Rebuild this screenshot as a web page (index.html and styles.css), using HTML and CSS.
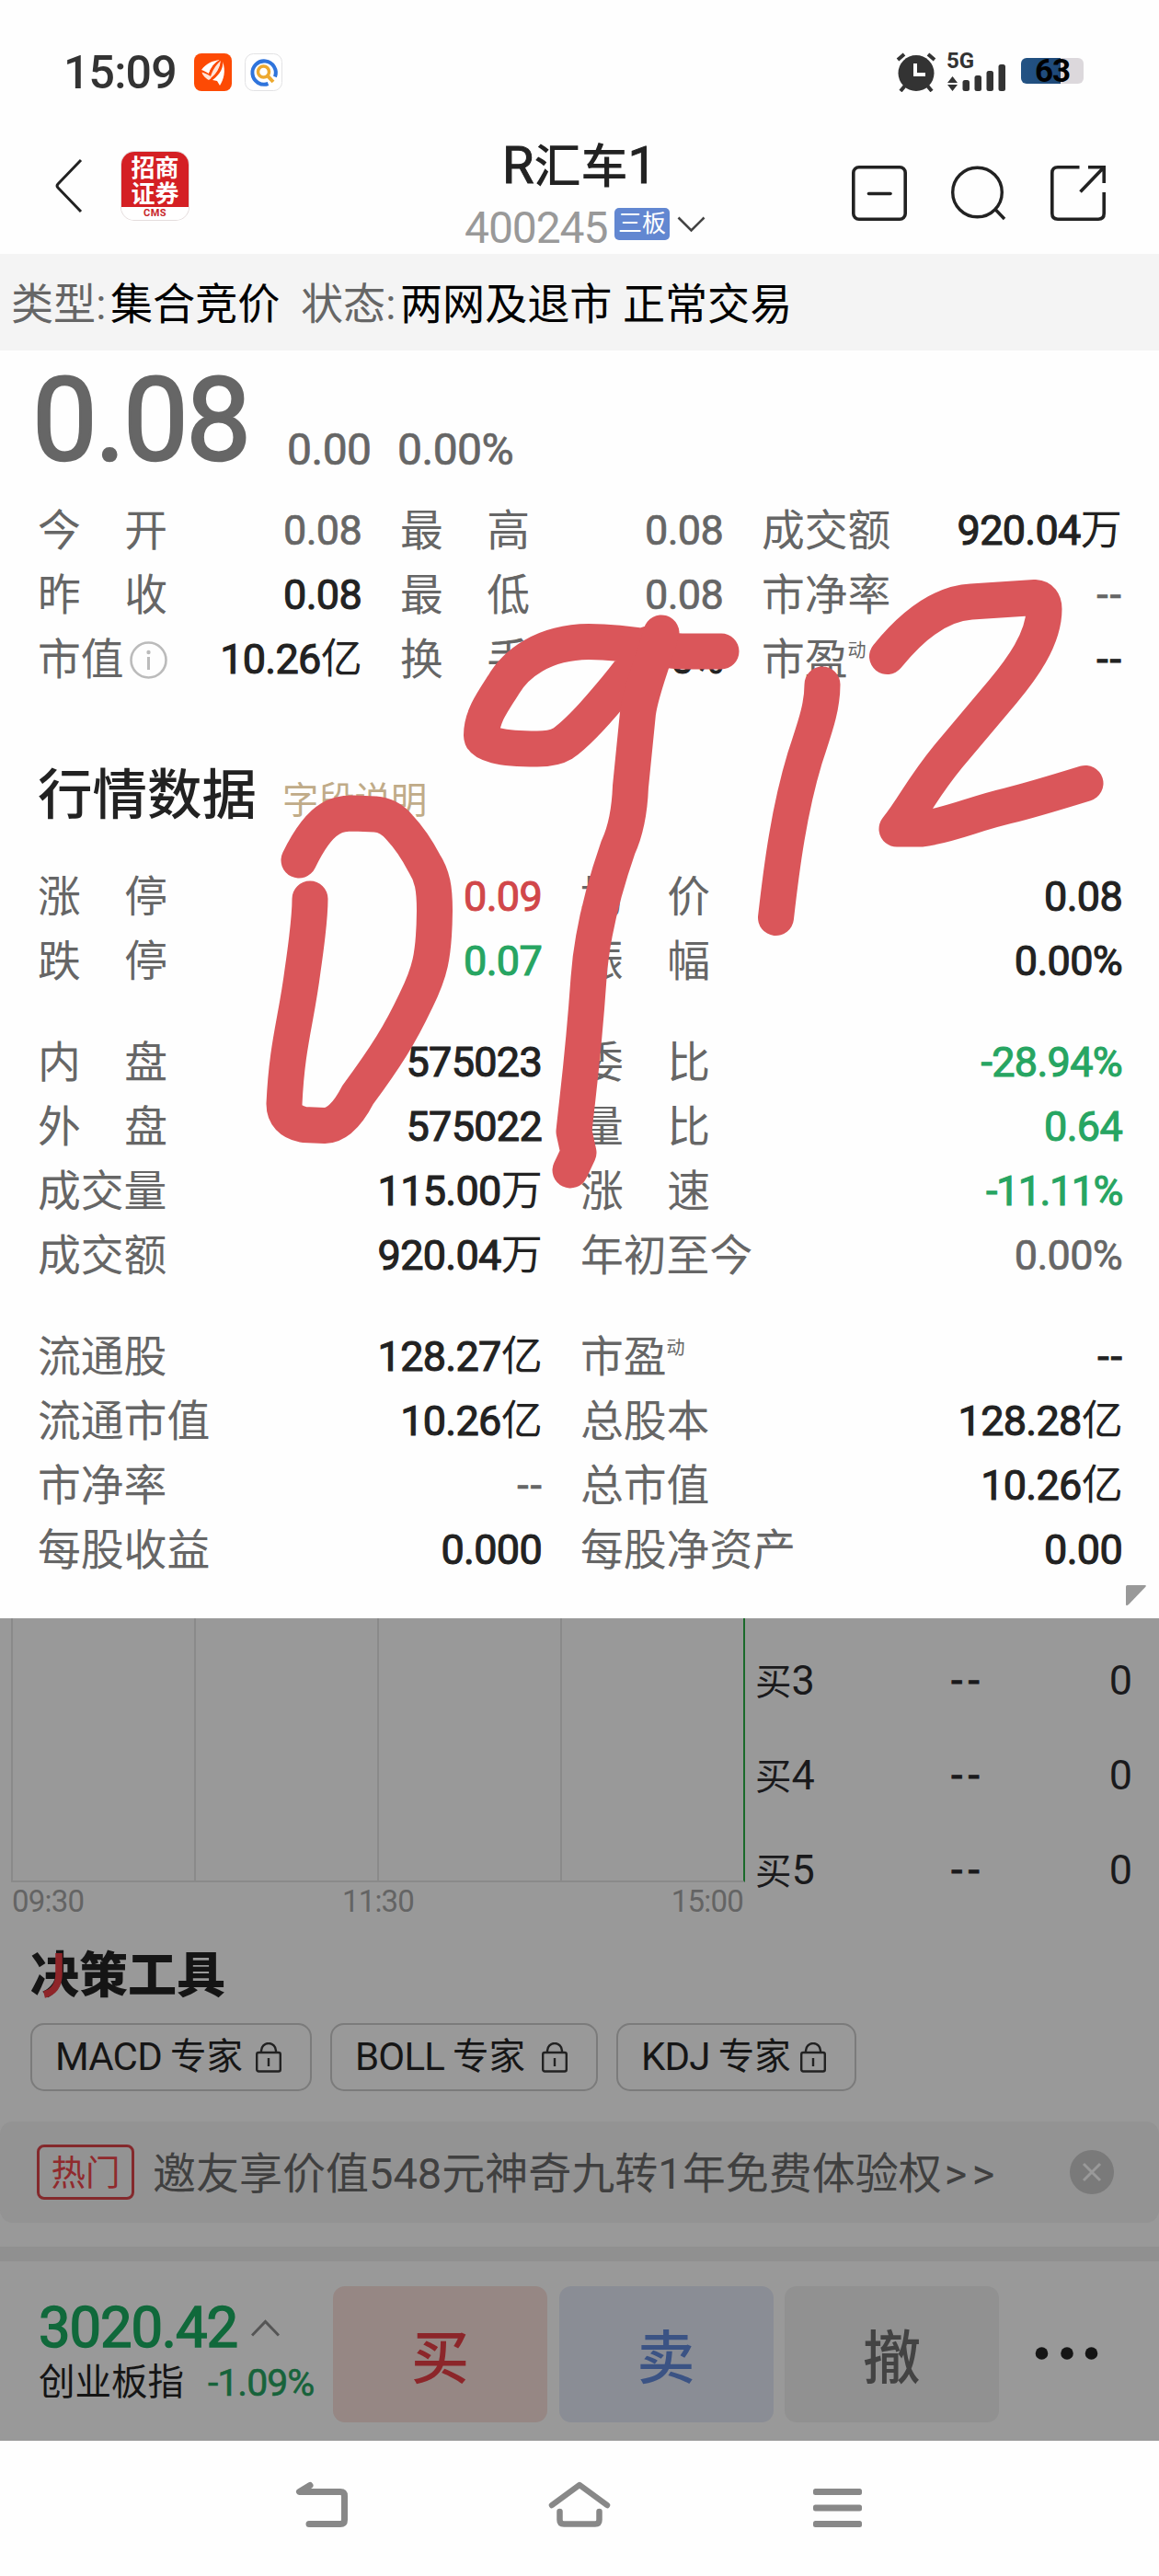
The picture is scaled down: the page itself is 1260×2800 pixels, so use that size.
FILE: index.html
```html
<!DOCTYPE html>
<html lang="zh-CN">
<head>
<meta charset="utf-8">
<title>R汇车1 400245</title>
<link rel="stylesheet" href="styles.css">
</head>
<body>
<div class="phone">
  <div class="status">
    <span class="clock">15:09</span>
    <svg class="app-a" width="41" height="41" viewBox="0 0 41 41"><rect width="41" height="41" rx="8" fill="#fd4a04"/><g fill="#fff"><path d="M8 18C13 11 20 8 28 7C22 11 18 16 16 22C13 20 11 19 8 18Z"/><path d="M29 8C23 13 20 19 18 25C15 23 11 21 8.500 20.500C9 23 11 26 16 29C23 25 28 18 29 8Z" opacity=".85"/><path d="M31 9C32 15 29 22 20 29L25 30L28 35C32 29 35 19 31 9Z"/></g><path d="M29 7Q19 12 16.500 23M30 8Q28 20 18.500 27.500" fill="none" stroke="#fd4a04" stroke-width="1.300"/></svg>
    <svg class="app-b" width="41" height="41" viewBox="0 0 41 41"><rect x=".5" y=".5" width="40" height="40" rx="9" fill="#fff" stroke="#e2e2e4"/><g fill="none" stroke-linecap="butt"><path d="M25.500 33A12.700 12.700 0 1 1 33 25.500" stroke="#2f74dc" stroke-width="4"/><circle cx="20.500" cy="20" r="6" stroke="#eda92f" stroke-width="3.500"/><path d="M24.500 24L31 31" stroke="#eda92f" stroke-width="4"/></g></svg>
    <svg class="alarm" width="44" height="43" viewBox="0 0 44 43"><circle cx="22" cy="22.500" r="19.500" fill="#333"/><path d="M2 8L9 2M42 8L35 2M5 42L10 36M39 42L34 36" stroke="#333" stroke-width="4"/><path d="M21 12V24H32" fill="none" stroke="#fff" stroke-width="4"/></svg>
    <div class="signal">
      <span class="net">5G</span>
      <svg width="66" height="29" viewBox="0 0 66 29" fill="#333"><path d="M6.500 13L12 20H1ZM6.500 29L1 22H12Z"/><rect x="17.500" y="17" width="7.500" height="12" rx="2.500"/><rect x="30.500" y="12" width="7.500" height="17" rx="2.500"/><rect x="43.500" y="7" width="7.500" height="22" rx="2.500"/><rect x="56.500" y="0" width="7.500" height="29" rx="2.500"/></svg>
    </div>
    <div class="battery">63</div>
  </div>

  <header class="header">
    <svg class="back" width="32" height="62" viewBox="0 0 32 62"><path d="M29 3L4 29Q2 31 4 33L29 59" fill="none" stroke="#222" stroke-width="3"/></svg>
    <div class="logo"><span class="logo-cn">招商</span><span class="logo-cn">证券</span><span class="logo-en">CMS</span></div>
    <div class="title">
      <div class="name"><b>R</b>汇车<b>1</b></div>
      <div class="code"><span>400245</span><i class="board">三板</i><svg width="31" height="18" viewBox="0 0 31 18"><path d="M1.500 1.500L15.500 15.500L29.500 1.500" fill="none" stroke="#444" stroke-width="2.600"/></svg></div>
    </div>
    <div class="actions">
      <svg width="60" height="60" viewBox="0 0 60 60" fill="none" stroke="#222" stroke-width="3.600" stroke-linecap="round"><rect x="1.800" y="1.800" width="56.400" height="56.400" rx="6"/><path d="M18.500 30.500H42"/></svg>
      <svg width="60" height="60" viewBox="0 0 60 60" fill="none" stroke="#222" stroke-width="3.400"><circle cx="28.500" cy="29" r="26.800"/><path d="M47.500 47L58 58"/></svg>
      <svg width="60" height="60" viewBox="0 0 60 60" fill="none" stroke="#222" stroke-width="3.600"><path d="M31.500 1.800H8Q1.800 1.800 1.800 8V52Q1.800 58.200 8 58.200H52Q58.200 58.200 58.200 52V29M41 1.800H58.200V19M58.200 1.800L32.500 28.500"/></svg>
    </div>
  </header>

  <div class="state"><span class="dim">类型:</span><span class="v1">集合竞价</span><span class="dim">状态:</span><span class="v2">两网及退市 正常交易</span></div>

  <main class="panel">
    <div class="price"><span class="last">0.08</span><span class="chg">0.00</span><span class="chg">0.00%</span></div>

    <div class="summary">
      <div class="cell"><span class="lb w3"><i>今</i><i>开</i></span><span class="val flat">0.08</span></div>
      <div class="cell"><span class="lb w3"><i>最</i><i>高</i></span><span class="val flat">0.08</span></div>
      <div class="cell"><span class="lb">成交额</span><span class="val">920.04<u>万</u></span></div>
      <div class="cell"><span class="lb w3"><i>昨</i><i>收</i></span><span class="val">0.08</span></div>
      <div class="cell"><span class="lb w3"><i>最</i><i>低</i></span><span class="val flat">0.08</span></div>
      <div class="cell"><span class="lb">市净率</span><span class="val flat none">--</span></div>
      <div class="cell"><span class="lb">市值</span><svg class="info" width="41" height="41" viewBox="0 0 41 41"><circle cx="20.500" cy="20.500" r="19" fill="none" stroke="#bbb" stroke-width="2.600"/><path d="M20.500 17V31" stroke="#bbb" stroke-width="3"/><circle cx="20.500" cy="12" r="2.200" fill="#bbb"/></svg><span class="val">10.26<u>亿</u></span></div>
      <div class="cell"><span class="lb w3"><i>换</i><i>手</i></span><span class="val">0.90%</span></div>
      <div class="cell"><span class="lb">市盈<sup>动</sup></span><span class="val none">--</span></div>
    </div>

    <div class="section"><h2>行情数据</h2><a>字段说明</a></div>

    <div class="detail">
      <div class="cell"><span class="lb w3"><i>涨</i><i>停</i></span><span class="val up">0.09</span></div>
      <div class="cell"><span class="lb w3"><i>均</i><i>价</i></span><span class="val">0.08</span></div>
      <div class="cell"><span class="lb w3"><i>跌</i><i>停</i></span><span class="val down">0.07</span></div>
      <div class="cell"><span class="lb w3"><i>振</i><i>幅</i></span><span class="val">0.00%</span></div>
    </div>
    <div class="detail">
      <div class="cell"><span class="lb w3"><i>内</i><i>盘</i></span><span class="val">575023</span></div>
      <div class="cell"><span class="lb w3"><i>委</i><i>比</i></span><span class="val down">-28.94%</span></div>
      <div class="cell"><span class="lb w3"><i>外</i><i>盘</i></span><span class="val">575022</span></div>
      <div class="cell"><span class="lb w3"><i>量</i><i>比</i></span><span class="val down">0.64</span></div>
      <div class="cell"><span class="lb">成交量</span><span class="val">115.00<u>万</u></span></div>
      <div class="cell"><span class="lb w3"><i>涨</i><i>速</i></span><span class="val down ones">-11.11%</span></div>
      <div class="cell"><span class="lb">成交额</span><span class="val">920.04<u>万</u></span></div>
      <div class="cell"><span class="lb">年初至今</span><span class="val flat">0.00%</span></div>
    </div>
    <div class="detail">
      <div class="cell"><span class="lb">流通股</span><span class="val">128.27<u>亿</u></span></div>
      <div class="cell"><span class="lb">市盈<sup>动</sup></span><span class="val none">--</span></div>
      <div class="cell"><span class="lb">流通市值</span><span class="val">10.26<u>亿</u></span></div>
      <div class="cell"><span class="lb">总股本</span><span class="val">128.28<u>亿</u></span></div>
      <div class="cell"><span class="lb">市净率</span><span class="val flat none">--</span></div>
      <div class="cell"><span class="lb">总市值</span><span class="val">10.26<u>亿</u></span></div>
      <div class="cell"><span class="lb">每股收益</span><span class="val">0.000</span></div>
      <div class="cell"><span class="lb">每股净资产</span><span class="val">0.00</span></div>
    </div>
    <svg class="fold" width="22" height="22" viewBox="0 0 22 22"><path d="M1.500 0H20.500Q23 0 21.200 2L3 21Q0 23.500 0 20.500V1.500Q0 0 1.500 0Z" fill="#999"/></svg>
  </main>

  <div class="under">
    <div class="market">
      <div class="chart">
        <div class="plot"><i></i><i></i><i></i><i></i></div>
        <div class="axis"><span>09:30</span><span>11:30</span><span>15:00</span></div>
      </div>
      <div class="book">
        <div><span>买<b>3</b></span><span class="dash">--</span><span>0</span></div>
        <div><span>买<b>4</b></span><span class="dash">--</span><span>0</span></div>
        <div><span>买<b>5</b></span><span class="dash">--</span><span>0</span></div>
      </div>
    </div>
    <div class="tools-title">决策工具<svg width="46" height="50" viewBox="0 0 46 50"><path d="M25 0V22Q25 41 9 45" fill="none" stroke="#8f2529" stroke-width="7.500"/></svg></div>
    <div class="tools">
      <div class="tool t1"><b>MACD</b>专家<svg width="28" height="33" viewBox="0 0 28 33"><path d="M6 11V9A8 8 0 0 1 22 9V11M14 17V26" fill="none" stroke="#222" stroke-width="2.400"/><rect x="1.200" y="11" width="25.600" height="20.500" rx="2" fill="none" stroke="#222" stroke-width="2.400"/></svg></div>
      <div class="tool t2"><b>BOLL</b>专家<svg width="28" height="33" viewBox="0 0 28 33"><path d="M6 11V9A8 8 0 0 1 22 9V11M14 17V26" fill="none" stroke="#222" stroke-width="2.400"/><rect x="1.200" y="11" width="25.600" height="20.500" rx="2" fill="none" stroke="#222" stroke-width="2.400"/></svg></div>
      <div class="tool t3"><b>KDJ</b>专家<svg width="28" height="33" viewBox="0 0 28 33"><path d="M6 11V9A8 8 0 0 1 22 9V11M14 17V26" fill="none" stroke="#222" stroke-width="2.400"/><rect x="1.200" y="11" width="25.600" height="20.500" rx="2" fill="none" stroke="#222" stroke-width="2.400"/></svg></div>
    </div>
    <div class="promo"><span class="hot">热门</span><span class="promo-text">邀友享价值548元神奇九转1年免费体验权<b>&gt;&gt;</b></span><svg width="48" height="48" viewBox="0 0 48 48"><circle cx="24" cy="24" r="24" fill="#7a7a7a"/><path d="M15 15L33 33M33 15L15 33" stroke="#999" stroke-width="3"/></svg></div>
    <div class="band"></div>
    <div class="trade">
      <div class="index">
        <div class="idx-row"><span class="idx">3020.42</span><svg width="31" height="19" viewBox="0 0 31 19"><path d="M1 17.500L15.500 2.500L30 17.500" fill="none" stroke="#555" stroke-width="3"/></svg></div>
        <div class="idx-sub"><span>创业板指</span><em>-1.09%</em></div>
      </div>
      <div class="btn buy">买</div>
      <div class="btn sell">卖</div>
      <div class="btn cancel">撤</div>
      <svg class="more" width="70" height="16" viewBox="0 0 70 16" fill="#151515"><circle cx="7.500" cy="8" r="6.800"/><circle cx="35" cy="8" r="6.800"/><circle cx="61.500" cy="8" r="6.800"/></svg>
    </div>
  </div>

  <nav class="nav">
    <svg width="58" height="52" viewBox="0 0 58 52" fill="none" stroke="#888" stroke-width="7" stroke-linecap="round" stroke-linejoin="round"><path d="M16 4.500L4.500 11.500H49Q53.500 11.500 53.500 16V42Q53.500 46.500 49 46.500H15"/></svg>
    <svg width="68" height="52" viewBox="0 0 68 52" fill="none" stroke="#888" stroke-width="6.500" stroke-linecap="round" stroke-linejoin="round"><path d="M4 26L34 4L64 26M12.500 33V42Q12.500 46.500 17 46.500H51Q55.500 46.500 55.500 42V33"/></svg>
    <svg width="53" height="52" viewBox="0 0 53 52" fill="#888"><rect y="8" width="53" height="7" rx="2.500"/><rect y="25.500" width="53" height="7" rx="2.500"/><rect y="43" width="53" height="7" rx="2.500"/></svg>
  </nav>

  <svg class="ink" width="1260" height="2800" viewBox="0 0 1260 2800" fill="none" stroke="#da565a" stroke-width="39" stroke-linecap="round" stroke-linejoin="round">
    <path d="M325 935Q342 900 359 890Q368 884 384 884L408 885Q423 886 434 899Q449 915 461 938C470 952 472.500 965 472.500 990C472 1040 467 1058 452 1088C435 1124 420 1148 389 1190Q372 1223 353 1223.500L330 1222.500Q309 1218 309 1200C312 1135 322 1110 329 1055Q337 1000 337 977"/>
    <path d="M784 708H742C720 708 690 697.500 640 697.500C590 698 560 722 547 745C534 765 523.500 780 523.500 799Q524 814 584 814Q602 814 612 808C640 788 690 725 705 700"/>
    <path d="M719 688C706 730 697 750 693.500 775L685.500 855Q684 895 672 921C655 970 643 1020 640 1063C634 1150 628 1190 624 1230L629 1253L620 1272"/>
    <path d="M894 744C894 770 885 793 875 824C858 880 850 940 843.500 997.500"/>
    <path d="M964.500 713.500C990 682 1020 656 1056 654L1125 649.500Q1135 650 1135 662C1135 695 1110 728 1090 752L1031 822C1000 860 995 876 975 901H1001C1030 898 1060 884 1095 876Q1120 870 1180 851.500"/>
  </svg>
</div>
</body>
</html>
```
FILE: styles.css
```css
* { box-sizing: border-box; }
body { margin: 0; background: #fff; font-family: Roboto, "Noto Sans CJK SC", sans-serif; color: #222; }
i, em { font-style: normal; }
u { text-decoration: none; }
svg { display: block; flex: none; }

.phone { position: relative; display: flex; flex-direction: column; width: 1260px; height: 2800px; overflow: hidden; background: #fefefe; }

.status { display: flex; align-items: flex-start; height: 150px; padding: 57px 82px 0 69px; color: #333; }
.clock { width: 142px; margin-top: -2px; font-size: 50px; line-height: 48px; font-weight: 500; letter-spacing: -.8px; }
.app-a { margin: 1px 14px 0 0; }
.app-b { margin-top: 1px; }
.alarm { margin-left: auto; }
.signal { width: 66px; margin-left: 11px; }
.net { display: block; height: 13px; font-size: 24px; line-height: 18px; font-weight: 700; }
.battery { width: 68px; height: 28px; margin: 6px 0 0 15px; border-radius: 6px; background: linear-gradient(90deg, #235384 0, #1e4877 43px, #dcd8dc 43px); font-size: 35px; line-height: 29px; font-weight: 700; letter-spacing: -1px; text-align: center; color: #000; }

.header { display: grid; grid-template-columns: 73px 374px 366px 1fr; height: 126px; padding-left: 59px; }
.back { margin-top: 21px; }
.logo { display: flex; flex-direction: column; align-items: center; width: 73px; height: 74px; margin-top: 15px; padding-top: 2px; border-radius: 14px; background: linear-gradient(#d42024 60px, #fff 60px); box-shadow: 0 0 0 1px #e4dcdc; color: #fff; }
.logo-cn { height: 28px; font-family: "Noto Sans CJK SC", sans-serif; font-size: 26px; line-height: 28px; font-weight: 700; }
.logo-en { margin-top: 3px; font-size: 11px; line-height: 12px; font-weight: 700; color: #c8272b; letter-spacing: .5px; }
.name { height: 73px; padding-left: 40px; font-size: 51px; line-height: 61px; font-weight: 500; white-space: nowrap; }
.name b { font-size: 56px; font-weight: 400; -webkit-text-stroke: 1px #222; }
.code { display: flex; align-items: center; height: 45px; font-size: 48px; line-height: 45px; color: #999; }
.code span { width: 162px; padding-top: 3px; letter-spacing: -1.100px; margin-left: -1px; }
.code .board { width: 60px; height: 35px; margin: -5px 8px 0 1px; border-radius: 5px; background: #6287d1; color: #fff; font-size: 26px; line-height: 34px; text-align: center; }
.code svg { margin-top: -4px; }
.actions { display: flex; gap: 48px; padding: 30px 0 0 54px; }

.state { display: flex; height: 105px; padding-left: 12px; background: #f4f4f4; font-size: 46.100px; line-height: 111px; color: #000; white-space: pre; }
.dim { color: #666; width: 108px; }
.v1 { width: 207px; }

.panel { position: relative; height: 1378px; background: #fefefe; }
.price { display: flex; align-items: baseline; height: 161px; padding-left: 35px; color: #666; }
.last { width: 277px; font-size: 126px; line-height: 153px; letter-spacing: -2.500px; -webkit-text-stroke: 2.500px #666; }
.chg { position: relative; top: 5px; width: 120px; font-size: 48px; -webkit-text-stroke: .7px #666; letter-spacing: -.5px; }

.summary { display: grid; grid-template-columns: 351px 350px 390px; column-gap: 43px; padding-left: 41px; grid-auto-rows: 70px; }
.cell { display: flex; align-items: center; height: 70px; line-height: 70px; white-space: nowrap; }
.lb { font-size: 46.800px; color: #666; }
.w3 { display: flex; justify-content: space-between; width: 141px; }
.lb sup { font-size: 20px; line-height: 20px; vertical-align: 19px; }
.info { margin-left: 6px; }
.val { margin-left: auto; margin-right: -1px; font-size: 45px; letter-spacing: -.7px; -webkit-text-stroke: 1.100px currentColor; }
.val u { -webkit-text-stroke: 0; }
.flat { color: #666; -webkit-text-stroke-width: .7px; }
.none { margin-right: -3px; letter-spacing: 2px; }
.ones { letter-spacing: -1.500px; }
.up { color: #d1474a; }
.down { color: #27a562; }

.section { display: flex; align-items: center; gap: 28px; height: 90px; margin: 68px 0 30px; padding-left: 41px; }
.section h2 { margin: 0; font-size: 59.500px; line-height: 90px; font-weight: 500; }
.section a { padding-top: 12px; font-size: 39.300px; line-height: 78px; color: #c0ab88; }

.detail { display: grid; grid-template-columns: 547px 588px; column-gap: 43px; padding-left: 41px; margin-bottom: 40px; }
.fold { position: absolute; right: 14px; bottom: 14px; }

.under { height: 894px; background: #999; color: #1a1a1c; }
.market { display: flex; height: 339px; }
.chart { width: 810px; padding-left: 12px; }
.plot { display: grid; grid-template-columns: repeat(4, 1fr); height: 287px; border-bottom: 2px solid #8a8a8a; border-right: 2px solid #1a6a2a; }
.plot i { border-left: 2px solid #8a8a8a; }
.axis { display: flex; justify-content: space-between; padding-left: 1px; font-size: 33px; line-height: 42px; color: #646464; letter-spacing: -.8px; }
.axis span:nth-child(2) { margin-right: -10px; margin-left: -9px; }
.axis span:nth-child(3) { margin-right: 2px; }
.book { flex: 1; padding: 16px 29px 0 11px; font-size: 45px; }
.book div { display: grid; grid-template-columns: 210px 1fr auto; height: 103px; line-height: 103px; }
.book span:first-child { font-size: 39.500px; }
.book b { font-size: 45px; font-weight: 400; }
.dash { letter-spacing: 6px; -webkit-text-stroke: .8px #1a1a1c; padding-left: 3px; }
.tools-title { position: relative; height: 101px; padding: 23px 0 0 33px; font-size: 53px; line-height: 54px; font-weight: 900; color: #151515; }
.tools-title svg { position: absolute; left: 39px; top: 25px; }
.tools { display: flex; gap: 20px; padding-left: 33px; height: 74px; }
.tool { display: flex; align-items: center; padding-left: 25px; border: 2px solid #7b7b7b; border-radius: 15px; font-size: 39.500px; line-height: 70px; color: #161616; }
.tool b { font-size: 42px; font-weight: 400; margin-right: 9px; letter-spacing: -.8px; }
.tool svg { margin-left: auto; }
.t1 { width: 306px; padding-right: 31px; }
.t2 { width: 291px; padding-right: 31px; }
.t3 { width: 261px; padding-right: 31px; }
.promo { display: flex; align-items: center; height: 110px; margin-top: 33px; padding: 0 49px 0 40px; border-radius: 14px; background: #939393; }
.hot { width: 106px; height: 60px; border: 3px solid #84292c; border-radius: 8px; color: #902a2d; font-size: 37.500px; line-height: 57px; text-align: center; }
.promo-text { margin-left: 20px; padding-top: 3px; font-size: 47px; line-height: 70px; color: #404040; }
.promo-text b { margin-left: 3px; font-weight: 400; letter-spacing: 5.500px; }
.promo svg { margin-left: auto; }
.band { height: 16px; margin-top: 26px; background: #909090; }
.trade { display: flex; align-items: center; height: 195px; padding: 6px 0 0 42px; }
.index { width: 320px; padding-bottom: 7px; }
.idx-row { display: flex; align-items: center; height: 70px; }
.idx { width: 231px; font-size: 61.500px; line-height: 70px; color: #10693b; letter-spacing: -1.100px; -webkit-text-stroke: 1.500px #10693b; }
.idx-sub { display: flex; font-size: 39.500px; line-height: 50px; color: #151515; }
.idx-sub em { margin-left: 26px; font-size: 41px; letter-spacing: -1px; color: #17633b; -webkit-text-stroke: .6px #17633b; }
.btn { width: 233px; height: 148px; margin-right: 12.500px; border-radius: 13px; font-size: 63px; font-weight: 500; line-height: 158px; text-align: center; }
.buy { background: #968784; color: #8c262a; }
.sell { background: #8a8d95; color: #3b5384; }
.cancel { background: #919191; color: #434343; }
.more { margin: -1px 0 0 26px; }

.nav { display: flex; height: 147px; padding: 44px 0 0 321px; }
.nav svg:nth-child(2) { margin-left: 217px; }
.nav svg:nth-child(3) { margin-left: 220px; }

.ink { position: absolute; left: 0; top: 0; }
```
